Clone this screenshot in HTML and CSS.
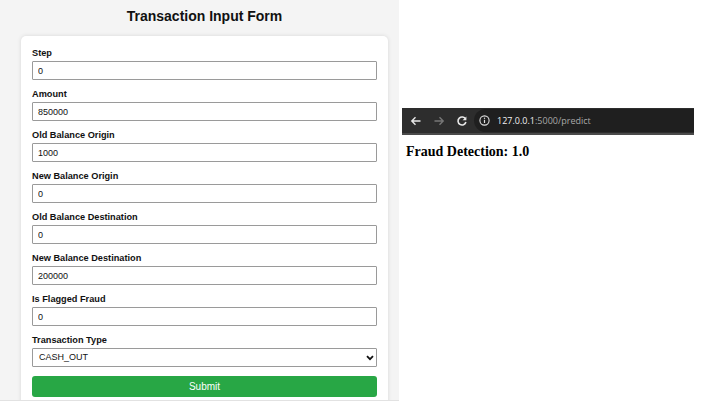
FILE: index.html
```html
<!DOCTYPE html>
<html>
<head>
<meta charset="utf-8">
<link rel="stylesheet" href="styles.css">
</head>
<body>
<div class="page">
  <div class="panel">
    <h1 class="title">Transaction Input Form</h1>
    <form class="card">
      <div class="field"><label class="label">Step</label><input class="input" value="0"></div>
      <div class="field"><label class="label">Amount</label><input class="input" value="850000"></div>
      <div class="field"><label class="label">Old Balance Origin</label><input class="input" value="1000"></div>
      <div class="field"><label class="label">New Balance Origin</label><input class="input" value="0"></div>
      <div class="field"><label class="label">Old Balance Destination</label><input class="input" value="0"></div>
      <div class="field"><label class="label">New Balance Destination</label><input class="input" value="200000"></div>
      <div class="field"><label class="label">Is Flagged Fraud</label><input class="input" value="0"></div>
      <div class="field field-select"><label class="label">Transaction Type</label>
        <div class="select-wrap">
          <div class="select">CASH_OUT</div>
          <svg class="chev" width="8" height="6" viewBox="0 0 8 6"><path d="M1 1.2 L4 4.2 L7 1.2" fill="none" stroke="#111" stroke-width="1.8"/></svg>
        </div>
      </div>
      <div class="submit">Submit</div>
    </form>
  </div>
  <div class="result">
    <div class="browser">
      <svg class="ico" width="12" height="12" viewBox="0 0 12 12"><path d="M10.5 6 H2 M5.5 2.3 L1.8 6 L5.5 9.7" fill="none" stroke="#e8e8e8" stroke-width="1.4"/></svg>
      <svg class="ico fwd" width="12" height="12" viewBox="0 0 12 12"><path d="M1.5 6 H10 M6.5 2.3 L10.2 6 L6.5 9.7" fill="none" stroke="#777" stroke-width="1.4"/></svg>
      <svg class="ico rel" width="12" height="12" viewBox="0 0 12 12"><path d="M9.6 4.2 A4 4 0 1 0 9.9 7" fill="none" stroke="#e8e8e8" stroke-width="1.6"/><path d="M10.4 1.4 V5.2 H6.6 Z" fill="#e8e8e8"/></svg>
      <div class="url">
        <svg class="info" width="11" height="11" viewBox="0 0 11 11"><circle cx="5.5" cy="5.5" r="4.6" fill="none" stroke="#e0e0e0" stroke-width="1.1"/><path d="M5.5 4.8 V8" stroke="#e0e0e0" stroke-width="1.2"/><circle cx="5.5" cy="3.2" r="0.7" fill="#e0e0e0"/></svg>
        <span class="host">127.0.0.1</span><span class="path">:5000/predict</span>
      </div>
    </div>
    <h2 class="verdict">Fraud Detection: 1.0</h2>
  </div>
</div>
</body>
</html>
```
FILE: styles.css
```css
* { box-sizing: border-box; }
body { margin: 0; background: #fff; font-family: "Liberation Sans", Arial, sans-serif; }
.page { display: flex; align-items: flex-start; }
.panel {
  width: 399px; height: 401px; overflow: hidden;
  background: #f4f4f4; padding: 0 11px 0 21px;
  border-bottom: 1px solid #e2e2e2;
}
.title {
  margin: 0; height: 36px; line-height: 32px;
  text-align: center; font-size: 14px; font-weight: bold; color: #111;
}
.card {
  margin: 0; background: #fff; border-radius: 5px;
  box-shadow: 0 0 4px rgba(0,0,0,0.12);
  padding: 10px 11px 20px; display: flex; flex-direction: column;
}
.field { display: flex; flex-direction: column; margin-bottom: 7px; }
.field-select { margin-bottom: 9px; }
.label { font-size: 9.2px; font-weight: bold; line-height: 14px; height: 13px; color: #111; margin-bottom: 2px; }
.input {
  height: 19px; border: 1px solid #9a9a9a; border-radius: 1px;
  font: 9px "Liberation Sans", Arial, sans-serif; color: #111;
  padding: 0 5px; outline: none; background: #fff; width: 100%;
}
.select-wrap { position: relative; }
.select {
  height: 19px; border: 1px solid #9a9a9a; border-radius: 1px;
  font-size: 9px; line-height: 17px; color: #111; padding: 0 6px;
}
.chev { position: absolute; right: 3px; top: 7px; }
.submit {
  height: 21px; background: #28a745; color: #fff; border-radius: 3px;
  font-size: 10px; line-height: 21px; text-align: center;
}
.result { padding: 108px 0 0 3px; width: 295px; }
.browser {
  height: 27px; background: #2d2d2d; border-bottom: 2px solid #4a4a4a;
  display: flex; align-items: center; padding-left: 8px;
}
.ico { margin-right: 11px; flex: none; }
.rel { margin-right: 6px; }
.url {
  flex: 1; height: 23px; background: #1f1f1f; border-radius: 12px 0 0 12px;
  display: flex; align-items: center; padding-left: 5px;
  font-family: "Open Sans", "Liberation Sans", sans-serif; font-size: 9px;
}
.info { margin-right: 7px; }
.host { color: #f0f0f0; }
.path { color: #a8a8a8; }
.verdict {
  margin: 7px 0 0 4px; font-family: "Liberation Serif", "Times New Roman", serif;
  font-size: 14px; font-weight: bold; color: #000; line-height: 20px;
}
```
